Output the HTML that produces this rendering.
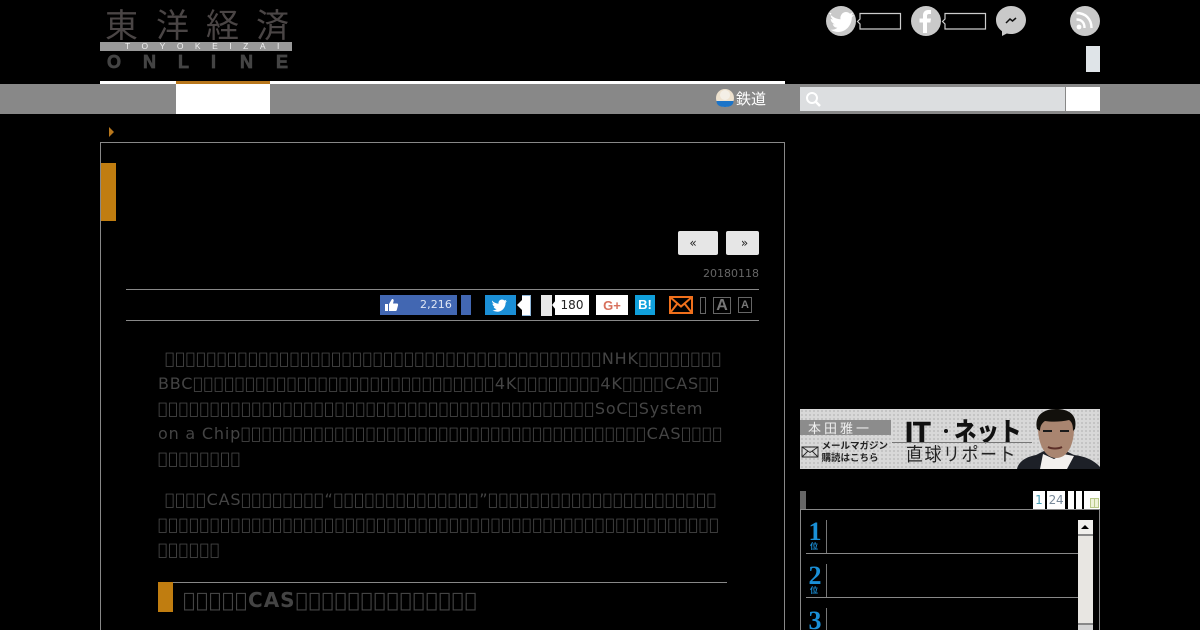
<!DOCTYPE html>
<html lang="ja"><head><meta charset="utf-8"><title>東洋経済オンライン</title>
<style>
html,body{margin:0;padding:0;background:#000;width:1200px;height:630px;overflow:hidden}
body{position:relative;font-family:"DejaVu Sans",sans-serif}
.a{position:absolute;display:block}
.l{position:absolute;left:158px;height:25px;line-height:25px;font:16px/25px "DejaVu Sans",sans-serif;letter-spacing:.8px;color:#444;white-space:nowrap}
.g{position:absolute;color:#4a4545;font:400 33px/36px "Noto Sans CJK JP",sans-serif;top:5px}
.o{position:absolute;color:#444;font:bold 18px/20px "Liberation Sans",sans-serif;top:52px;-webkit-text-stroke:.7px #444}
</style></head><body>

<!-- logo -->
<span class="g" style="left:105px">東</span><span class="g" style="left:156px">洋</span><span class="g" style="left:206px">経</span><span class="g" style="left:256px">済</span>
<div class="a" style="left:100px;top:42px;width:192px;height:9px;background:#999;color:#eee;font:8.5px/9px 'Liberation Sans',sans-serif;letter-spacing:11.5px;text-indent:25px;white-space:nowrap">TOYOKEIZAI</div>
<span class="o" style="left:107px">O</span><span class="o" style="left:143px">N</span><span class="o" style="left:178px">L</span><span class="o" style="left:211px">I</span><span class="o" style="left:240px">N</span><span class="o" style="left:276px">E</span>

<!-- nav -->
<div class="a" style="left:0;top:84px;width:1200px;height:30px;background:#888"></div>
<div class="a" style="left:100px;top:81px;width:685px;height:3px;background:#fff"></div>
<div class="a" style="left:176px;top:81px;width:94px;height:33px;background:#fff"></div>
<div class="a" style="left:176px;top:81px;width:94px;height:3px;background:#b8771c"></div>
<svg class="a" style="left:715px;top:88px" width="20" height="21" viewBox="0 0 20 21"><circle cx="10" cy="10" r="9" fill="#eee2cf"/><path d="M1.500 13h17c0 4-3 6-8.500 6S1.500 17 1.500 13z" fill="#1c74c8"/><circle cx="10" cy="7" r="5" fill="#f4efe6"/></svg>
<div class="a" style="left:736px;top:88px;color:#fff;font:15px/21px 'Noto Sans CJK JP',sans-serif;white-space:nowrap">鉄道</div>
<div class="a" style="left:800px;top:87px;width:265px;height:24px;background:#dcdee0"></div>
<div class="a" style="left:1066px;top:87px;width:34px;height:24px;background:#fff"></div>
<svg class="a" style="left:804px;top:91px" width="18" height="18" viewBox="0 0 18 18"><circle cx="8" cy="7" r="5" fill="none" stroke="#fff" stroke-width="2"/><path d="M11.500 10.500L16 15" stroke="#fff" stroke-width="2.500"/></svg>

<!-- social -->
<svg class="a" style="left:820px;top:0" width="285" height="42" viewBox="820 0 285 42">
<circle cx="841" cy="21" r="15" fill="#c9c9c9"/>
<path d="M829 13c3 4 7 6 11.500 6.300-.7-3.800 2-7.300 5.500-7.300 1.600 0 3 .7 4 1.700l3.200-1.200-1.800 3 2.800-.8-2.400 2.700c0 7.800-5.800 14.600-13.300 14.600-3 0-5.500-.9-7.700-2.300 2.500.2 5-.5 6.600-2-2.400-.1-4-1.400-4.700-3.500h2.200c-2.500-.8-4.100-2.800-4.200-5.300l2.400.7c-2.400-1.900-3-4.500-1.600-6.600z" fill="#fff"/>
<path d="M860 13.500h40.500v15.500H860v-5l-2.500-2.500 2.500-2.500z" fill="none" stroke="#ccc" stroke-width="1.200"/>
<circle cx="926" cy="21" r="15" fill="#c9c9c9"/>
<path d="M923 33V22.500h-3.500v-4H923v-3c0-3.500 2-5.500 5-5.500h3v4h-2c-1.300 0-2 .6-2 2v2.500h4l-.6 4H927V33z" fill="#fff"/>
<path d="M945 13.500h40.500v15.500H945v-5l-2.500-2.500 2.500-2.500z" fill="none" stroke="#ccc" stroke-width="1.200"/>
<path d="M1011 6c8.300 0 15 6.300 15 14s-6.700 14-15 14c-1.500 0-2.800-.2-4.200-.5L1002 36v-4.800c-3.700-2.600-6-6.600-6-11.200 0-7.700 6.700-14 15-14z" fill="#c9c9c9"/>
<path d="M1006 23l4-4 2.500 2 3.500-3" fill="none" stroke="#111" stroke-width="1.500"/>
<circle cx="1085" cy="21" r="15" fill="#c9c9c9"/>
<circle cx="1079" cy="27" r="2.400" fill="#fff"/>
<path d="M1076.500 19.500c5 0 8 3 8 8.500M1076.500 13c9 0 15 6 15 15" fill="none" stroke="#fff" stroke-width="2.400"/>
</svg>
<div class="a" style="left:1086px;top:46px;width:14px;height:26px;background:#dfe4e8"></div>

<!-- article frame -->
<div class="a" style="left:109px;top:127px;width:0;height:0;border-left:5px solid #b8771c;border-top:5px solid transparent;border-bottom:5px solid transparent"></div>
<div class="a" style="left:100px;top:142px;width:683px;height:500px;border:1px solid #888"></div>
<div class="a" style="left:101px;top:163px;width:15px;height:58px;background:#c07d10"></div>

<div class="a" style="left:678px;top:231px;width:40px;height:24px;background:#e6e6e6;border-radius:2px;color:#222;font:12px/24px 'DejaVu Sans',sans-serif;text-align:center;text-indent:-10px">«</div>
<div class="a" style="left:726px;top:231px;width:33px;height:24px;background:#e6e6e6;border-radius:2px;color:#222;font:12px/24px 'DejaVu Sans',sans-serif;text-align:center;text-indent:4px">»</div>
<div class="a" style="left:659px;top:266px;width:100px;text-align:right;color:#666;font:11px/15px 'DejaVu Sans',sans-serif">20180118</div>

<!-- share -->
<div class="a" style="left:126px;top:289px;width:633px;height:1px;background:#888"></div>
<div class="a" style="left:126px;top:320px;width:633px;height:1px;background:#888"></div>
<div class="a" style="left:380px;top:295px;width:77px;height:20px;background:#4267b2;color:#dfe6f4;font:11px/20px 'DejaVu Sans',sans-serif;letter-spacing:.1px;text-align:right"><span style="margin-right:5px">2,216</span></div>
<svg class="a" style="left:384px;top:298px" width="15" height="14" viewBox="0 0 15 14"><path d="M1 6h3v7H1zM5 6l3-5c1.500 0 2 1 1.500 2.500L9 5.500h4c1 0 1.300 1 1 2l-1.200 4.500c-.2.700-.7 1-1.500 1H5z" fill="#fff"/></svg>
<div class="a" style="left:461px;top:295px;width:10px;height:20px;background:#4267b2"></div>
<div class="a" style="left:485px;top:295px;width:31px;height:20px;background:#1b8fd6"></div>
<svg class="a" style="left:491px;top:299px" width="16" height="13" viewBox="0 0 16 13"><path d="M1 1.500c1.800 2 3.800 3 6.500 3.200C7.200 2.500 8.700.5 11 .5c1 0 1.800.4 2.400 1l2-.7-1 1.700 1.600-.4-1.400 1.600c0 5-3.700 9-8.300 9-1.800 0-3.500-.5-4.800-1.400 1.500.1 3-.3 4.100-1.200-1.500-.1-2.500-.9-3-2.200h1.400C2.500 7.300 1.500 6 1.500 4.500L3 5C1.500 3.800 .8 2.800 1 1.500z" fill="#fff"/></svg>
<div class="a" style="left:517px;top:295px;width:0;height:0;border-right:5px solid #fff;border-top:5px solid transparent;border-bottom:5px solid transparent;margin-top:5px"></div>
<div class="a" style="left:522px;top:295px;width:8px;height:19px;background:#fff;border:1px solid #8fb6d8;border-left:0"></div>
<div class="a" style="left:541px;top:295px;width:11px;height:21px;background:#e8e8e8"></div>
<div class="a" style="left:555px;top:295px;width:34px;height:20px;background:#fff;color:#222;font:12px/21px 'DejaVu Sans',sans-serif;text-align:center">180</div>
<div class="a" style="left:552px;top:300px;width:0;height:0;border-right:4px solid #fff;border-top:5px solid transparent;border-bottom:5px solid transparent"></div>
<div class="a" style="left:596px;top:295px;width:32px;height:20px;background:#fff;color:#d8705c;font:bold 13px/21px 'Liberation Sans',sans-serif;text-align:center">G+</div>
<div class="a" style="left:635px;top:295px;width:20px;height:20px;background:#10a0dc;color:#fff;font:bold 13px/20px 'Liberation Sans',sans-serif;text-align:center">B!</div>
<svg class="a" style="left:669px;top:296px" width="24" height="18" viewBox="0 0 24 18"><path d="M1 1h22v16H1zM1 1l11 9.500L23 1M1 17l7.500-9.500M23 17l-7.500-9.500" fill="none" stroke="#f0701c" stroke-width="2"/></svg>
<div class="a" style="left:700px;top:297px;width:4px;height:15px;border:1px solid #666"></div>
<div class="a" style="left:713px;top:297px;width:16px;height:15px;border:1px solid #666;color:#777;font:bold 16px/16px 'Liberation Sans',sans-serif;text-align:center">A</div>
<div class="a" style="left:738px;top:297px;width:12px;height:14px;border:1px solid #666;color:#777;font:bold 11px/15px 'Liberation Sans',sans-serif;text-align:center">A</div>

<!-- body text -->
<div class="l" style="top:346px;left:165px">&#xE000;&#xE000;&#xE000;&#xE000;&#xE000;&#xE000;&#xE000;&#xE000;&#xE000;&#xE000;&#xE000;&#xE000;&#xE000;&#xE000;&#xE000;&#xE000;&#xE000;&#xE000;&#xE000;&#xE000;&#xE000;&#xE000;&#xE000;&#xE000;&#xE000;&#xE000;&#xE000;&#xE000;&#xE000;&#xE000;&#xE000;&#xE000;&#xE000;&#xE000;&#xE000;&#xE000;&#xE000;&#xE000;&#xE000;&#xE000;&#xE000;&#xE000;NHK&#xE000;&#xE000;&#xE000;&#xE000;&#xE000;&#xE000;&#xE000;&#xE000;</div>
<div class="l" style="top:371px">BBC&#xE000;&#xE000;&#xE000;&#xE000;&#xE000;&#xE000;&#xE000;&#xE000;&#xE000;&#xE000;&#xE000;&#xE000;&#xE000;&#xE000;&#xE000;&#xE000;&#xE000;&#xE000;&#xE000;&#xE000;&#xE000;&#xE000;&#xE000;&#xE000;&#xE000;&#xE000;&#xE000;&#xE000;&#xE000;4K&#xE000;&#xE000;&#xE000;&#xE000;&#xE000;&#xE000;&#xE000;&#xE000;4K&#xE000;&#xE000;&#xE000;&#xE000;CAS&#xE000;&#xE000;</div>
<div class="l" style="top:396px">&#xE000;&#xE000;&#xE000;&#xE000;&#xE000;&#xE000;&#xE000;&#xE000;&#xE000;&#xE000;&#xE000;&#xE000;&#xE000;&#xE000;&#xE000;&#xE000;&#xE000;&#xE000;&#xE000;&#xE000;&#xE000;&#xE000;&#xE000;&#xE000;&#xE000;&#xE000;&#xE000;&#xE000;&#xE000;&#xE000;&#xE000;&#xE000;&#xE000;&#xE000;&#xE000;&#xE000;&#xE000;&#xE000;&#xE000;&#xE000;&#xE000;&#xE000;SoC&#xE000;System</div>
<div class="l" style="top:421px">on a Chip&#xE000;&#xE000;&#xE000;&#xE000;&#xE000;&#xE000;&#xE000;&#xE000;&#xE000;&#xE000;&#xE000;&#xE000;&#xE000;&#xE000;&#xE000;&#xE000;&#xE000;&#xE000;&#xE000;&#xE000;&#xE000;&#xE000;&#xE000;&#xE000;&#xE000;&#xE000;&#xE000;&#xE000;&#xE000;&#xE000;&#xE000;&#xE000;&#xE000;&#xE000;&#xE000;&#xE000;&#xE000;&#xE000;&#xE000;CAS&#xE000;&#xE000;&#xE000;&#xE000;</div>
<div class="l" style="top:446px">&#xE000;&#xE000;&#xE000;&#xE000;&#xE000;&#xE000;&#xE000;&#xE000;</div>
<div class="l" style="top:487px;left:165px">&#xE000;&#xE000;&#xE000;&#xE000;CAS&#xE000;&#xE000;&#xE000;&#xE000;&#xE000;&#xE000;&#xE000;&#xE000;“&#xE000;&#xE000;&#xE000;&#xE000;&#xE000;&#xE000;&#xE000;&#xE000;&#xE000;&#xE000;&#xE000;&#xE000;&#xE000;&#xE000;”&#xE000;&#xE000;&#xE000;&#xE000;&#xE000;&#xE000;&#xE000;&#xE000;&#xE000;&#xE000;&#xE000;&#xE000;&#xE000;&#xE000;&#xE000;&#xE000;&#xE000;&#xE000;&#xE000;&#xE000;&#xE000;&#xE000;</div>
<div class="l" style="top:512px">&#xE000;&#xE000;&#xE000;&#xE000;&#xE000;&#xE000;&#xE000;&#xE000;&#xE000;&#xE000;&#xE000;&#xE000;&#xE000;&#xE000;&#xE000;&#xE000;&#xE000;&#xE000;&#xE000;&#xE000;&#xE000;&#xE000;&#xE000;&#xE000;&#xE000;&#xE000;&#xE000;&#xE000;&#xE000;&#xE000;&#xE000;&#xE000;&#xE000;&#xE000;&#xE000;&#xE000;&#xE000;&#xE000;&#xE000;&#xE000;&#xE000;&#xE000;&#xE000;&#xE000;&#xE000;&#xE000;&#xE000;&#xE000;&#xE000;&#xE000;&#xE000;&#xE000;&#xE000;&#xE000;</div>
<div class="l" style="top:537px">&#xE000;&#xE000;&#xE000;&#xE000;&#xE000;&#xE000;</div>

<div class="a" style="left:173px;top:582px;width:554px;height:1px;background:#888"></div>
<div class="a" style="left:158px;top:582px;width:15px;height:30px;background:#c07d10"></div>
<div class="l" style="left:183px;top:588px;font:bold 20px/25px 'DejaVu Sans',sans-serif;letter-spacing:1px;color:#444">&#xE000;&#xE000;&#xE000;&#xE000;&#xE000;CAS&#xE000;&#xE000;&#xE000;&#xE000;&#xE000;&#xE000;&#xE000;&#xE000;&#xE000;&#xE000;&#xE000;&#xE000;&#xE000;&#xE000;</div>

<!-- banner -->
<svg class="a" style="left:800px;top:409px" width="300" height="60" viewBox="0 0 300 60">
<defs><pattern id="d" width="4" height="4" patternUnits="userSpaceOnUse"><rect width="4" height="4" fill="#d8d8d8"/><circle cx="2" cy="2" r="1" fill="#bebebe"/></pattern></defs>
<rect width="300" height="60" fill="url(#d)"/>
<rect x="0" y="11" width="91" height="15" fill="#8c8c8c"/>
<text x="8" y="24" font-family="Noto Sans CJK JP" font-size="13" letter-spacing="3" fill="#eee">本田雅一</text>
<path d="M2 38h16v10H2zM2 38l8 5.500 8-5.500M2 48l6-6M18 48l-6-6" fill="none" stroke="#222" stroke-width=".9"/>
<text x="21.500" y="40" font-family="Noto Sans CJK JP" font-size="9.500" font-weight="700" fill="#222">メールマガジン</text>
<text x="21.500" y="52" font-family="Noto Sans CJK JP" font-size="9.500" font-weight="700" fill="#222">購読はこちら</text>
<text x="105" y="33" font-family="Liberation Sans" font-size="29" font-weight="700" fill="#111" stroke="#111" stroke-width=".6">IT</text>
<circle cx="146" cy="22" r="2" fill="#111"/>
<text transform="translate(154 32) scale(1 1.150)" font-family="Noto Sans CJK JP" font-size="22.500" font-weight="900" fill="#111">ネット</text>
<rect x="92" y="33" width="140" height="1" fill="#777"/>
<text transform="translate(106 52) scale(1 1.100)" font-family="Noto Sans CJK JP" font-size="17" fill="#222" letter-spacing="1.500">直球リポート</text>
<path d="M217 60c2-8 9-12 19-14l8-4h22l8 4c10 1 20 5 26 12v2z" fill="#1d2027"/>
<path d="M240 60l3-15 11 5 9-5 11 2-7 13z" fill="#f3f0ee"/>
<path d="M238 19c0-12 8-18 18-18s18 7 18 18c0 16-6 30-18 30-11 0-18-14-18-30z" fill="#a98570"/>
<path d="M237 20C234 6 244 0 256 0s22 5 19 20l-2 2c0-6-1-9-4-11-8 2-18 2-24 1-3 2-5 5-5 10z" fill="#12100c"/>
<path d="M243 22h9M260 22h9" stroke="#1a1a1a" stroke-width="2"/>
<path d="M248 38c4 2 10 2 14 0" stroke="#5c2f28" stroke-width="2" fill="none"/>
</svg>

<!-- ranking -->
<div class="a" style="left:800px;top:491px;width:6px;height:18px;background:#666"></div>
<div class="a" style="left:1033px;top:491px;width:12px;height:18px;background:#fff;color:#4a9fb5;font:12px/18px 'DejaVu Sans',sans-serif;text-align:center">1</div>
<div class="a" style="left:1047px;top:491px;width:18px;height:18px;background:#fff;color:#7a8a9a;font:12px/18px 'DejaVu Sans',sans-serif;text-align:center;letter-spacing:-.3px">24</div>
<div class="a" style="left:1068px;top:491px;width:6px;height:18px;background:#fff"></div>
<div class="a" style="left:1076px;top:491px;width:6px;height:18px;background:#fff"></div>
<div class="a" style="left:1084px;top:491px;width:16px;height:18px;background:#fff"></div>
<div class="a" style="left:1090px;top:498px;width:3px;height:8px;border:1px solid #b9c98a;background:#eef2d8"></div>
<div class="a" style="left:1094px;top:498px;width:3px;height:8px;border:1px solid #b9c98a;background:#eef2d8"></div>
<div class="a" style="left:800px;top:509px;width:298px;height:130px;border:1px solid #888"></div>

<div class="a" style="left:806px;top:553px;width:272px;height:1px;background:#888"></div>
<div class="a" style="left:806px;top:597px;width:272px;height:1px;background:#888"></div>
<div class="a" style="left:826px;top:520px;width:1px;height:33px;background:#777"></div>
<div class="a" style="left:826px;top:564px;width:1px;height:33px;background:#777"></div>
<div class="a" style="left:826px;top:608px;width:1px;height:22px;background:#777"></div>
<div class="a" style="left:805px;top:519px;width:20px;color:#1a90d8;font:bold 26px/26px 'Liberation Serif',serif;text-align:center">1</div>
<div class="a" style="left:805px;top:542px;width:18px;color:#1a90d8;font:bold 8px/10px 'Noto Sans CJK JP',sans-serif;text-align:center">位</div>
<div class="a" style="left:805px;top:563px;width:20px;color:#1a90d8;font:bold 26px/26px 'Liberation Serif',serif;text-align:center">2</div>
<div class="a" style="left:805px;top:586px;width:18px;color:#1a90d8;font:bold 8px/10px 'Noto Sans CJK JP',sans-serif;text-align:center">位</div>
<div class="a" style="left:805px;top:608px;width:20px;color:#1a90d8;font:bold 26px/26px 'Liberation Serif',serif;text-align:center">3</div>

<div class="a" style="left:1078px;top:520px;width:15px;height:110px;background:#e8e6e2"></div>
<div class="a" style="left:1078px;top:520px;width:15px;height:16px;background:#f0efec;border-bottom:2px solid #888;box-sizing:border-box"></div>
<div class="a" style="left:1081px;top:525px;width:0;height:0;border-left:4px solid transparent;border-right:4px solid transparent;border-bottom:4px solid #000"></div>
<div class="a" style="left:1078px;top:623px;width:15px;height:2px;background:#888"></div>
<div class="a" style="left:1078px;top:625px;width:15px;height:5px;background:#d4d4d4"></div>
</body></html>
